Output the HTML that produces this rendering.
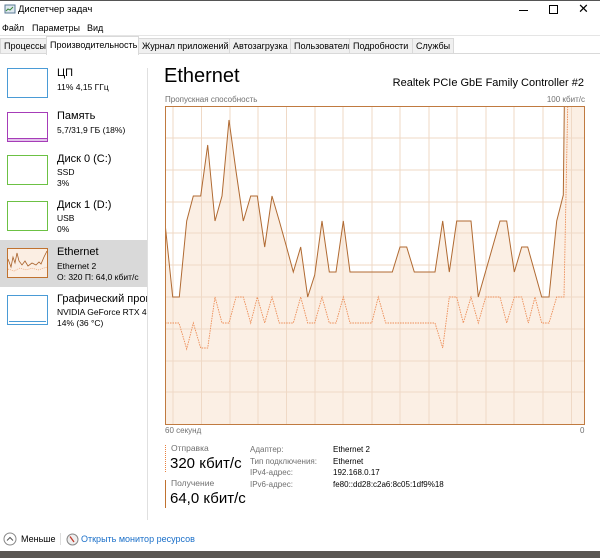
<!DOCTYPE html>
<html><head><meta charset="utf-8"><style>
*{margin:0;padding:0;box-sizing:border-box}
body{width:600px;height:558px;overflow:hidden;background:#fff;font-family:"Segoe UI","Liberation Sans",sans-serif;font-size:9px;color:#000;position:relative}
.a{position:absolute;white-space:nowrap}
.tab{position:absolute;top:38px;height:16px;background:#f0f0f0;border:1px solid #d9d9d9;font-size:9px;line-height:14px;padding-left:3px;white-space:nowrap;overflow:hidden}
.th{position:absolute;left:7px;width:41px;height:30px;border:1px solid}
.nm{position:absolute;left:57px;font-size:11px;white-space:nowrap}
.sb{position:absolute;left:57px;font-size:8.5px;line-height:11px;white-space:nowrap}
.g{color:#707070}
</style></head><body>
<div class="a" style="left:0;top:0;width:600px;height:1px;background:#555"></div>
<svg class="a" style="left:4px;top:4px" width="12" height="12"><rect x="1" y="1" width="10" height="8" fill="#dfe8f0" stroke="#5a7a94"/><polyline points="2,7 4,5 6,6 9,3" fill="none" stroke="#3a8a3a"/></svg>
<div class="a" style="left:18px;top:4px;font-size:9.5px">Диспетчер задач</div>
<div class="a" style="left:519px;top:10px;width:9px;height:1px;background:#000"></div>
<div class="a" style="left:549px;top:5px;width:9px;height:9px;border:1px solid #000"></div>
<div class="a" style="left:578px;top:1px;font-size:13px">✕</div>
<div class="a" style="left:2px;top:23px;font-size:9px">Файл</div>
<div class="a" style="left:32px;top:23px;font-size:9px">Параметры</div>
<div class="a" style="left:87px;top:23px;font-size:9px">Вид</div>
<div class="a" style="left:0;top:35px;width:600px;height:1px;background:#e5e5e5"></div>
<div class="a" style="left:0;top:53px;width:600px;height:1px;background:#d9d9d9"></div>
<div class="tab" style="left:0;width:47px">Процессы</div>
<div class="tab" style="left:46px;top:36px;height:19px;width:93px;background:#fff;border-bottom:none;line-height:17px">Производительность</div>
<div class="tab" style="left:138px;width:92px">Журнал приложений</div>
<div class="tab" style="left:229px;width:62px">Автозагрузка</div>
<div class="tab" style="left:290px;width:60px">Пользователи</div>
<div class="tab" style="left:349px;width:64px">Подробности</div>
<div class="tab" style="left:412px;width:42px">Службы</div>

<div class="a" style="left:147px;top:68px;width:1px;height:452px;background:#e0e0e0"></div>
<div class="th" style="top:68px;border-color:#4a9bd6"></div>
<div class="nm" style="top:67px">ЦП</div><div class="sb" style="top:82px">11% 4,15 ГГц</div>
<div class="th" style="top:112px;border-color:#a63cb8"><div style="position:absolute;left:0;right:0;bottom:0;height:3px;background:#e2c4ea;border-top:1px solid #a63cb8"></div></div>
<div class="nm" style="top:110px">Память</div><div class="sb" style="top:125px">5,7/31,9 ГБ (18%)</div>
<div class="th" style="top:155px;border-color:#6cc144"></div>
<div class="nm" style="top:153px">Диск 0 (C:)</div><div class="sb" style="top:167px">SSD<br>3%</div>
<div class="th" style="top:201px;border-color:#6cc144"></div>
<div class="nm" style="top:199px">Диск 1 (D:)</div><div class="sb" style="top:213px">USB<br>0%</div>
<div class="a" style="left:0;top:240px;width:147px;height:47px;background:#d9d9d9"></div>
<div class="th" style="top:248px;border-color:#c0722f;background:#fbeee3"><svg width="39" height="28" style="position:absolute;left:0;top:0"><polyline points="0,10 3,18 5,8 7,14 9,4 11,12 14,16 17,12 20,17 24,14 28,16 31,13 33,15 36,8 39,2" fill="none" stroke="#a8612a" stroke-width="0.8"/><polyline points="0,20 6,22 12,19 18,21 24,19 30,21 36,19 39,18" fill="none" stroke="#e8905a" stroke-width="0.6" stroke-dasharray="1,1"/></svg></div>
<div class="nm" style="top:246px">Ethernet</div><div class="sb" style="top:261px">Ethernet 2<br>О: 320 П: 64,0 кбит/с</div>
<div class="th" style="top:295px;border-color:#4a9bd6"><div style="position:absolute;left:1px;right:1px;bottom:2px;height:1px;background:#4a9bd6"></div></div>
<div class="nm" style="top:293px;width:90px;overflow:hidden">Графический процессор</div><div class="sb" style="top:307px;width:90px;overflow:hidden">NVIDIA GeForce RTX 4060<br>14% (36 °C)</div>

<div class="a" style="left:164px;top:65px;font-size:20px">Ethernet</div>
<div class="a" style="left:584px;top:77px;font-size:11px;transform:translateX(-100%)">Realtek PCIe GbE Family Controller #2</div>
<div class="a g" style="left:165px;top:95px;font-size:8px">Пропускная способность</div>
<div class="a g" style="left:585px;top:95px;font-size:8px;transform:translateX(-100%)">100 кбит/с</div>
<svg class="a" style="left:165px;top:106px" width="421" height="320" viewBox="165 106 421 320">
<rect x="165.5" y="106.5" width="420" height="318" fill="#fff"/>
<polygon fill="#fbefe4" points="165,223 172.7,297 179.3,297 186.7,221 193.3,196 200.7,196 207.7,145 215,221 222,196 229,120 236,171 243.3,221 250.7,196 257.3,196 264.7,247 272,196 279.3,221 286,245 293.3,272 300.7,247 307.7,297 314.7,275 322,221 329.3,272 336,272 343.3,221 350,272 392.3,272 400,247 406.7,247 414.3,272 435,272 442.7,221 449.3,272 456.7,221 471,221 478.3,297 500,221 506.7,221 514.3,272 521.7,247 527.7,247 541.7,297 549,297 556.7,221 563.3,195 564.3,107 585,107 585,424 165,424"/>
<g stroke="#efd9c6" stroke-width="1">
<line x1="165" x2="585" y1="138" y2="138"/><line x1="165" x2="585" y1="170" y2="170"/><line x1="165" x2="585" y1="202" y2="202"/><line x1="165" x2="585" y1="233" y2="233"/><line x1="165" x2="585" y1="265" y2="265"/><line x1="165" x2="585" y1="297" y2="297"/><line x1="165" x2="585" y1="329" y2="329"/><line x1="165" x2="585" y1="361" y2="361"/><line x1="165" x2="585" y1="392" y2="392"/>
<line y1="106" y2="424" x1="173" x2="173"/><line y1="106" y2="424" x1="201.5" x2="201.5"/><line y1="106" y2="424" x1="230" x2="230"/><line y1="106" y2="424" x1="258" x2="258"/><line y1="106" y2="424" x1="286.5" x2="286.5"/><line y1="106" y2="424" x1="315" x2="315"/><line y1="106" y2="424" x1="343" x2="343"/><line y1="106" y2="424" x1="372" x2="372"/><line y1="106" y2="424" x1="400" x2="400"/><line y1="106" y2="424" x1="429" x2="429"/><line y1="106" y2="424" x1="457" x2="457"/><line y1="106" y2="424" x1="486" x2="486"/><line y1="106" y2="424" x1="514" x2="514"/><line y1="106" y2="424" x1="543" x2="543"/><line y1="106" y2="424" x1="571.5" x2="571.5"/>
</g>
<polyline fill="none" stroke="#b06a32" stroke-width="1" points="165,223 172.7,297 179.3,297 186.7,221 193.3,196 200.7,196 207.7,145 215,221 222,196 229,120 236,171 243.3,221 250.7,196 257.3,196 264.7,247 272,196 279.3,221 286,245 293.3,272 300.7,247 307.7,297 314.7,275 322,221 329.3,272 336,272 343.3,221 350,272 392.3,272 400,247 406.7,247 414.3,272 435,272 442.7,221 449.3,272 456.7,221 471,221 478.3,297 500,221 506.7,221 514.3,272 521.7,247 527.7,247 541.7,297 549,297 556.7,221 563.3,195 564.3,107"/>
<polyline fill="none" stroke="#ec8c55" stroke-width="0.9" stroke-dasharray="1.5,1" points="165,323 179,323 186.7,349 193.3,323 200.7,348 207.7,348 215,297 222,323 229,323 236,297 243.3,297 250.7,323 257.3,297 264.7,323 272,297 279.3,323 293.3,323 300.7,297 307.7,323 314.7,323 322,297 329.3,323 336,323 343.3,297 350,323 371.7,323 378.3,297 385.7,323 435,323 442.7,348 449.3,297 456.7,297 463.3,323 471,297 478.3,323 485.7,297 500,297 506.7,323 514.3,297 521.7,297 528.3,323 535,297 541.7,323 549,323 556.7,297 564,297 567.7,107"/>
<rect x="165.5" y="106.5" width="419" height="318" fill="none" stroke="#c07a40" stroke-width="1"/>
</svg>
<div class="a g" style="left:165px;top:426px;font-size:8px">60 секунд</div>
<div class="a g" style="left:580px;top:426px;font-size:8px">0</div>

<div class="a" style="left:165px;top:445px;width:0;height:27px;border-left:1px dotted #e8803f"></div>
<div class="a g" style="left:171px;top:443px;font-size:8.5px">Отправка</div>
<div class="a" style="left:170px;top:455px;font-size:15px">320 кбит/с</div>
<div class="a" style="left:165px;top:480px;width:1px;height:28px;background:#c0722f"></div>
<div class="a g" style="left:171px;top:478px;font-size:8.5px">Получение</div>
<div class="a" style="left:170px;top:490px;font-size:15px">64,0 кбит/с</div>
<div class="a g" style="left:250px;top:444px;font-size:8px;line-height:11.5px">Адаптер:<br>Тип подключения:<br>IPv4-адрес:<br>IPv6-адрес:</div>
<div class="a" style="left:333px;top:444px;font-size:8px;line-height:11.5px">Ethernet 2<br>Ethernet<br>192.168.0.17<br>fe80::dd28:c2a6:8c05:1df9%18</div>

<svg class="a" style="left:3px;top:532px" width="14" height="14"><circle cx="7" cy="7" r="6" fill="none" stroke="#888"/><polyline points="4,8.5 7,5.5 10,8.5" fill="none" stroke="#555"/></svg>
<div class="a" style="left:21px;top:534px;font-size:9px">Меньше</div>
<div class="a" style="left:60px;top:533px;width:1px;height:12px;background:#ddd"></div>
<svg class="a" style="left:66px;top:533px" width="13" height="13"><circle cx="6.5" cy="6.5" r="5.5" fill="#eee" stroke="#888"/><line x1="4" y1="3.5" x2="8" y2="9" stroke="#c0392b" stroke-width="1.3"/></svg>
<div class="a" style="left:81px;top:534px;font-size:9px;color:#1a6fc9">Открыть монитор ресурсов</div>
<div class="a" style="left:0;top:551px;width:600px;height:7px;background:#5a5753"></div>
</body></html>
